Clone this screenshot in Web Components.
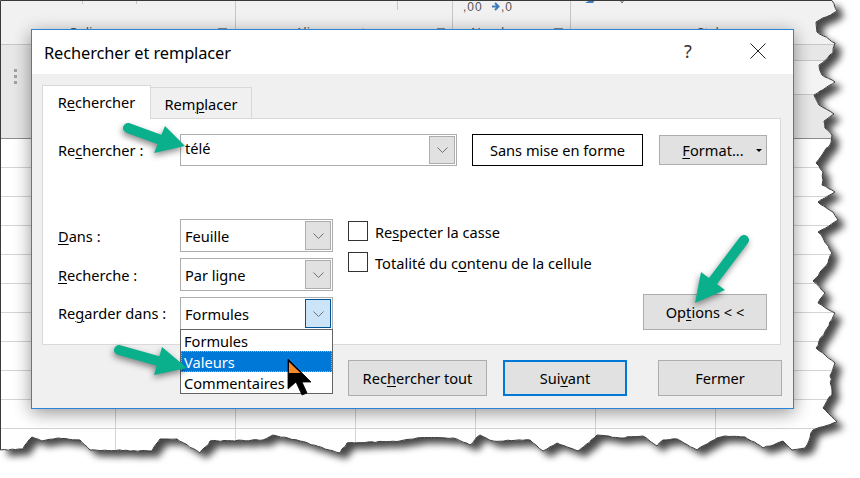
<!DOCTYPE html>
<html lang="fr">
<head>
<meta charset="utf-8">
<title>Rechercher et remplacer</title>
<style>
  html, body { margin: 0; padding: 0; background: #fff; }
  body { width: 860px; height: 478px; overflow: hidden; font-family: "Noto Sans", "Open Sans", sans-serif; }
</style>
</head>
<body>
<find-stage>
  <sheet-backdrop></sheet-backdrop>
  <find-dialog heading="Rechercher et remplacer"></find-dialog>
  <green-arrow tail="128,128" tip="185,146" a="165,126" b="154,153"></green-arrow>
  <green-arrow tail="119,350" tip="187,368" a="162,347" b="154,375"></green-arrow>
  <green-arrow tail="744,240" tip="695,303" a="701,272" b="725,290"></green-arrow>
  <mouse-pointer></mouse-pointer>
</find-stage>

<script>
class FindStage extends HTMLElement {
  constructor() {
    super();
    this.attachShadow({ mode: "open" });
    this.shadowRoot.innerHTML = `
      <style>
        :host { display: block; position: relative; width: 860px; height: 478px; overflow: hidden; }
      </style>
      <slot></slot>
    `;
  }
}

class SheetBackdrop extends HTMLElement {
  constructor() {
    super();
    this.attachShadow({ mode: "open" });
  }

  connectedCallback() {
    const edge = this._tornEdge();
    const hLines = [167, 196, 225, 254, 283, 312, 341, 370, 399, 428]
      .map((y) => `<rect x="1" y="${y}" width="850" height="1" fill="#d4d4d4"/>`).join("");
    const vLines = [115, 235, 355, 475, 595, 715]
      .map((x) => `<rect x="${x}" y="399" width="1" height="60" fill="#d4d4d4"/>`).join("");

    this.shadowRoot.innerHTML = `
      <style>
        :host { position: absolute; inset: 0; display: block; }
        svg { display: block; }
        text { font-family: "Noto Sans", sans-serif; fill: #555; }
        text.num { font-family: "Liberation Sans", sans-serif; font-size: 12px; letter-spacing: 1px; }
      </style>
      <svg width="860" height="478" viewBox="0 0 860 478">
        <defs>
          <clipPath id="sheet"><polygon points="${edge}"/></clipPath>
          <filter id="torn" x="-5%" y="-5%" width="110%" height="110%">
            <feDropShadow dx="7" dy="6" stdDeviation="3.6" flood-color="#000" flood-opacity="0.72"/>
          </filter>
          <filter id="soft" x="-10%" y="-15%" width="120%" height="130%">
            <feGaussianBlur stdDeviation="9"/>
          </filter>
        </defs>
        <polygon points="${edge}" fill="#fff" filter="url(#torn)"/>
        <g clip-path="url(#sheet)">
          <rect x="0" y="0" width="860" height="44" fill="#f1f1f1"/>
          <rect x="0" y="44" width="860" height="94" fill="#e7e7e7"/>
          <rect x="794" y="60" width="66" height="34" fill="#f3f3f3"/>
          <rect x="0" y="44" width="860" height="1" fill="#c6c6c6"/>
          <rect x="794" y="60" width="66" height="1" fill="#c6c6c6"/>
          <rect x="794" y="94" width="66" height="1" fill="#c6c6c6"/>
          <rect x="0" y="138" width="860" height="1" fill="#8c8c8c"/>
          <rect x="14" y="69" width="3" height="3" fill="#a0a0a0"/>
          <rect x="14" y="75" width="3" height="3" fill="#a0a0a0"/>
          <rect x="14" y="81" width="3" height="3" fill="#a0a0a0"/>
          <rect x="82" y="0" width="1" height="4" fill="#c6c6c6"/>
          <rect x="136" y="0" width="1" height="4" fill="#c6c6c6"/>
          <rect x="235" y="0" width="1" height="44" fill="#c6c6c6"/>
          <rect x="397" y="0" width="1" height="10" fill="#c6c6c6"/>
          <rect x="452" y="0" width="1" height="29" fill="#c6c6c6"/>
          <rect x="570" y="0" width="1" height="44" fill="#c6c6c6"/>
          <rect x="218" y="28" width="9" height="1" fill="#8a8a8a"/>
          <rect x="437" y="28" width="8" height="1" fill="#8a8a8a"/>
          <rect x="554" y="28" width="9" height="1" fill="#8a8a8a"/>
          <text x="70" y="37" font-size="13">Police</text>
          <text x="295" y="37" font-size="13">Alignement</text>
          <text x="471" y="37" font-size="13">Nombre</text>
          <text x="697" y="37" font-size="13">Style</text>
          <text class="num" x="463" y="11">,00</text>
          <path d="M492 6.5h6M495 3l3.5 3.5-3.5 3.5" fill="none" stroke="#3f7cba" stroke-width="2"/>
          <text class="num" x="501" y="11">,0</text>
          <path d="M585 3l5-3h5l-2 3z" fill="#3f7cba"/>
          <path d="M620 0l2 3 2-3" fill="none" stroke="#666"/>
          ${hLines}${vLines}
          <rect x="31" y="33" width="763" height="380" fill="#000" opacity="0.42" filter="url(#soft)"/>
        </g>
        <polygon points="${edge}" fill="none" stroke="#3a3a3a" stroke-width="1"/>
      </svg>
    `;
  }

  // contour déchiré : points relevés sur la capture, plus un peu de bruit
  _tornEdge() {
    const pts = [
      [0.5, 0.5], [832, 0.5], [837, 11], [816, 22], [817, 32], [835, 43], [833, 53], [819, 65], [822, 75], [835, 82],
      [814, 95], [819, 105], [834, 114], [824, 121], [825, 128], [832, 135], [831, 143], [822, 155], [816, 163],
      [823, 172], [822, 185], [835, 192], [818, 202], [833, 212], [838, 220], [818, 232], [823, 238], [832, 253],
      [828, 263], [813, 281], [825, 293], [818, 303], [835, 313], [816, 348], [835, 363], [830, 376], [832, 395],
      [823, 408], [837, 422], [813, 430], [805, 448], [792, 450], [783, 441], [763, 448], [745, 437], [725, 436],
      [717, 438], [697, 450], [677, 439], [663, 440], [657, 446], [643, 436], [620, 438], [597, 435], [578, 451],
      [557, 443], [543, 451], [530, 440], [493, 441], [480, 435], [470, 445], [453, 438], [417, 438], [400, 441],
      [347, 443], [340, 453], [300, 441], [273, 435], [263, 440], [210, 441], [200, 453], [177, 439], [160, 439],
      [152, 451], [90, 450], [80, 440], [58, 438], [42, 441], [32, 437], [23, 449], [0.5, 450]
    ];
    let seed = 7;
    const rnd = () => {
      seed = (seed * 1103515245 + 12345) & 0x7fffffff;
      return seed / 0x7fffffff - 0.5;
    };
    const out = [];
    pts.forEach((p, i) => {
      out.push(p);
      const q = pts[i + 1];
      if (!q || i === 0) return;
      const steps = Math.floor(Math.hypot(q[0] - p[0], q[1] - p[1]) / 3.5);
      const amp = Math.abs(q[1] - p[1]) > Math.abs(q[0] - p[0]) ? 2 : 1.1;
      for (let s = 1; s < steps; s++) {
        const t = s / steps;
        out.push([p[0] + (q[0] - p[0]) * t + rnd() * amp, p[1] + (q[1] - p[1]) * t + rnd() * amp]);
      }
    });
    return out.map((p) => p[0].toFixed(1) + "," + p[1].toFixed(1)).join(" ");
  }
}

class FindDialog extends HTMLElement {
  constructor() {
    super();
    this.attachShadow({ mode: "open" });
  }

  connectedCallback() {
    this.shadowRoot.innerHTML = `
      <style>
        :host {
          position: absolute; left: 31px; top: 29px; display: flex; flex-direction: column;
          width: 763px; height: 380px; box-sizing: border-box;
          border: 1px solid #2a86d4; background: #f0f0f0; color: #000;
          font: 14.6px/20px "Noto Sans", sans-serif;
        }
        .titlebar { height: 44px; box-sizing: border-box; flex: none; display: flex; align-items: center; background: #fff; padding: 2px 0 0 12px; }
        .title { flex: 1; font-size: 16.4px; letter-spacing: -0.1px; }
        .help { width: 20px; margin-right: 52px; text-align: center; font-size: 18px; color: #333; position: relative; top: -2px; }
        .close { width: 16px; height: 16px; margin-right: 27px; display: block; position: relative; top: -2px; }
        .body { flex: 1; padding: 11px 11px 0 10px; display: flex; flex-direction: column; }
        .tabs { display: flex; align-items: flex-end; height: 33px; margin-right: 1px; }
        .tab { box-sizing: border-box; height: 31px; border: 1px solid #d9d9d9; border-bottom: 0; background: #f0f0f0; text-align: center; }
        .tab.active { height: 34px; margin-bottom: -1px; background: #fff; position: relative; z-index: 1; padding-top: 6px; width: 109px; }
        .tab.other { width: 101px; border-left: 0; padding-top: 6px; }
        .pane { box-sizing: border-box; height: 227px; margin-right: 1px; border: 1px solid #d9d9d9; background: #fff; padding: 15px 13px 0 15px; }
        .row { display: flex; align-items: center; height: 32px; }
        .row label { width: 122px; flex: none; }
        .what { --value-lift: 6px; width: 277px; height: 32px; margin-right: 15px; }
        .plain { width: 171px; height: 32px; margin-right: 16px; }
        .format { width: 108px; height: 30px; }
        .lower { display: grid; grid-template-columns: 122px 153px auto 1fr; grid-template-rows: 34px 33px 34px; row-gap: 5px; margin-top: 53px; }
        .lower label { align-self: center; }
        .lower dlg-combo:last-of-type { height: 33px; align-self: end; }
        .checks { grid-column: 3; grid-row: 1 / 4; display: flex; flex-direction: column; gap: 11px; padding: 2px 0 0 15px; }
        .options { grid-column: 4; grid-row: 3; justify-self: end; align-self: end; width: 124px; height: 36px; }
        .footer { display: flex; justify-content: flex-end; margin-top: 15px; }
        .footer dlg-button { height: 36px; width: 124px; }
        .footer .all { width: 139px; margin-right: 16px; }
        .footer .next { margin-right: 31px; }
        u { text-underline-offset: 2px; text-decoration-thickness: 1px; }
      </style>
      <div class="titlebar">
        <span class="title">${this.getAttribute("heading")}</span>
        <span class="help">?</span>
        <svg class="close" viewBox="0 0 16 16"><path d="M0.5 0.5l15 15M15.5 0.5l-15 15" stroke="#222" stroke-width="1" fill="none"/></svg>
      </div>
      <div class="body">
        <div class="tabs">
          <div class="tab active">R<u>e</u>chercher</div>
          <div class="tab other">Rem<u>p</u>lacer</div>
        </div>
        <div class="pane">
          <div class="row">
            <label>Re<u>c</u>hercher :</label>
            <dlg-combo class="what">télé</dlg-combo>
            <dlg-button class="plain" kind="outlined">Sans mise en forme</dlg-button>
            <dlg-button class="format" caret><u>F</u>ormat...</dlg-button>
          </div>
          <div class="lower">
            <label style="grid-column:1;grid-row:1"><u>D</u>ans :</label>
            <dlg-combo style="grid-column:2;grid-row:1">Feuille</dlg-combo>
            <label style="grid-column:1;grid-row:2"><u>R</u>echerche :</label>
            <dlg-combo style="grid-column:2;grid-row:2">Par ligne</dlg-combo>
            <label style="grid-column:1;grid-row:3">Re<u>g</u>arder dans :</label>
            <dlg-combo style="grid-column:2;grid-row:3" open>
              Formules
              <span slot="list">Formules</span>
              <span slot="list" data-selected>Valeurs</span>
              <span slot="list">Commentaires</span>
            </dlg-combo>
            <div class="checks">
              <dlg-check>Re<u>s</u>pecter la casse</dlg-check>
              <dlg-check>Totalité du c<u>o</u>ntenu de la cellule</dlg-check>
            </div>
            <dlg-button class="options">Op<u>t</u>ions &lt; &lt;</dlg-button>
          </div>
        </div>
        <div class="footer">
          <dlg-button class="all">Rec<u>h</u>ercher tout</dlg-button>
          <dlg-button class="next" kind="default">Sui<u>v</u>ant</dlg-button>
          <dlg-button>Fermer</dlg-button>
        </div>
      </div>
    `;
  }
}

class DlgCombo extends HTMLElement {
  constructor() {
    super();
    this.attachShadow({ mode: "open" });
    this.shadowRoot.innerHTML = `
      <style>
        :host {
          display: flex; align-items: center; position: relative; box-sizing: border-box;
          border: 1px solid #adadad; background: #fff; padding: 1px; height: 33px;
        }
        .value { flex: 1; padding: 1px 0 var(--value-lift, 0) 3px; white-space: nowrap; }
        .btn {
          width: 26px; align-self: stretch; box-sizing: border-box; flex: none;
          display: flex; align-items: center; justify-content: center;
          background: #e1e1e1; border: 1px solid #adadad;
        }
        :host([open]) .btn { background: #cce4f7; border-color: #005499; }
        .list {
          display: none; position: absolute; left: -1px; right: -1px; top: 100%; z-index: 5;
          box-sizing: border-box; height: 65px; border: 1px solid #646464; background: #fff;
        }
        :host([open]) .list { display: block; }
        ::slotted([slot="list"]) { display: block; height: 21px; line-height: 21px; padding: 1px 0 0 3px; box-sizing: border-box; white-space: nowrap; }
        ::slotted([data-selected]) { background: #0078d7; color: #fff; outline: 1px dotted #ff9a3c; outline-offset: -1px; }
        svg { display: block; }
      </style>
      <span class="value"><slot></slot></span>
      <span class="btn"><svg width="11" height="6" viewBox="0 0 11 6"><path d="M0.5 0.5l5 5 5-5" fill="none" stroke="#707070" stroke-width="1"/></svg></span>
      <div class="list"><slot name="list"></slot></div>
    `;
  }
}

class DlgButton extends HTMLElement {
  constructor() {
    super();
    this.attachShadow({ mode: "open" });
    this.shadowRoot.innerHTML = `
      <style>
        :host {
          display: flex; align-items: center; justify-content: center; position: relative; box-sizing: border-box;
          border: 1px solid #adadad; background: #e1e1e1; white-space: nowrap;
        }
        :host([kind="outlined"]) { background: #fff; border-color: #000; }
        :host([kind="default"]) { border: 2px solid #0078d7; }
        .caret { display: none; position: absolute; right: 4px; top: 13px; width: 0; height: 0; border: 3px solid transparent; border-top: 3px solid #000; border-bottom: 0; }
        :host([caret]) .caret { display: block; }
      </style>
      <slot></slot><span class="caret"></span>
    `;
  }
}

class DlgCheck extends HTMLElement {
  constructor() {
    super();
    this.attachShadow({ mode: "open" });
    this.shadowRoot.innerHTML = `
      <style>
        :host { display: flex; align-items: center; gap: 7px; height: 20px; white-space: nowrap; }
        .box { width: 20px; height: 20px; box-sizing: border-box; border: 1px solid #333; background: #fff; flex: none; }
        .text { padding-top: 1px; }
      </style>
      <span class="box"></span><span class="text"><slot></slot></span>
    `;
  }
}

class GreenArrow extends HTMLElement {
  constructor() {
    super();
    this.attachShadow({ mode: "open" });
  }

  connectedCallback() {
    const get = (n) => this.getAttribute(n).split(",").map(Number);
    const [tail, tip, a, b] = ["tail", "tip", "a", "b"].map(get);
    const mid = [(a[0] + b[0]) / 2, (a[1] + b[1]) / 2];
    this.shadowRoot.innerHTML = `
      <style>
        :host { position: absolute; inset: 0; display: block; pointer-events: none; z-index: 10; }
        svg { display: block; filter: drop-shadow(-1px 3px 3px rgba(0,0,0,.45)); }
      </style>
      <svg width="860" height="478" viewBox="0 0 860 478">
        <line x1="${tail[0]}" y1="${tail[1]}" x2="${mid[0]}" y2="${mid[1]}" stroke="#0aaf8c" stroke-width="10" stroke-linecap="round"/>
        <polygon points="${tip} ${a} ${b}" fill="#0aaf8c"/>
      </svg>
    `;
  }
}

class MousePointer extends HTMLElement {
  constructor() {
    super();
    this.attachShadow({ mode: "open" });
    this.shadowRoot.innerHTML = `
      <style>
        :host { position: absolute; left: 286px; top: 357px; width: 28px; height: 40px; display: block; z-index: 11; }
        svg { display: block; }
      </style>
      <svg width="28" height="40" viewBox="286 357 28 40">
        <path d="M288 359L311 382L302 382L307 393L302 395L296 382L288 389Z" fill="#000" stroke="#000" stroke-width="0.8"/>
        <path d="M289 362L289 373L300.5 373Z" fill="#f68a2a"/>
      </svg>
    `;
  }
}

customElements.define("find-stage", FindStage);
customElements.define("sheet-backdrop", SheetBackdrop);
customElements.define("find-dialog", FindDialog);
customElements.define("dlg-combo", DlgCombo);
customElements.define("dlg-button", DlgButton);
customElements.define("dlg-check", DlgCheck);
customElements.define("green-arrow", GreenArrow);
customElements.define("mouse-pointer", MousePointer);
</script>
</body>
</html>
